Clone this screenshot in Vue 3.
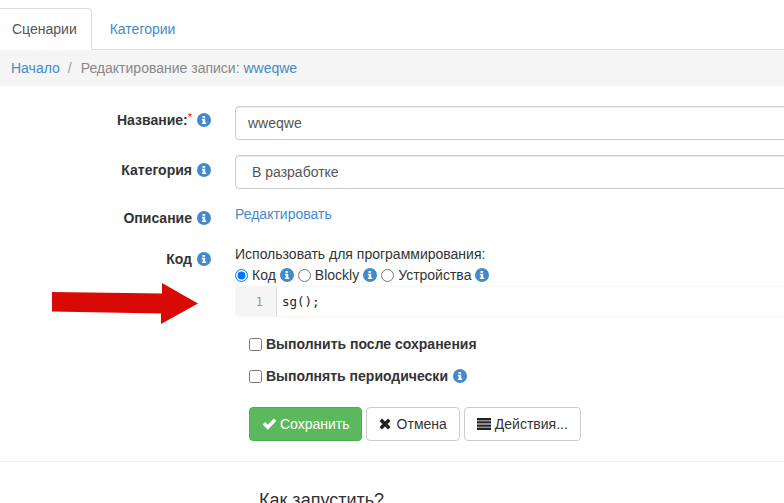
<script setup>
const iPath = 'M5.4 2.9h2.7v1.9H5.4zM4.9 5.8h3.3v3.7h1v1.6H4.9V9.500h1V7.400h-1z'
</script>

<template>
  <div class="page">
    <ul class="tabs">
      <li class="tab active">Сценарии</li>
      <li class="tab">Категории</li>
    </ul>
    <div class="crumbs">
      <a>Начало</a><span class="sep">/</span><span class="muted">Редактирование записи:</span>&nbsp;<a>wweqwe</a>
    </div>

    <form class="form" @submit.prevent>
      <div class="row r-name">
        <label class="lab">Название:<span class="req">*</span><svg class="info" viewBox="0 0 14 14"><circle cx="7" cy="7" r="7" fill="#428bca"/><path :d="iPath" fill="#fff"/></svg></label>
        <div class="field"><div class="control">wweqwe</div></div>
      </div>
      <div class="row r-cat">
        <label class="lab">Категория<svg class="info" viewBox="0 0 14 14"><circle cx="7" cy="7" r="7" fill="#428bca"/><path :d="iPath" fill="#fff"/></svg></label>
        <div class="field"><div class="control select">В разработке</div></div>
      </div>
      <div class="row r-desc">
        <label class="lab">Описание<svg class="info" viewBox="0 0 14 14"><circle cx="7" cy="7" r="7" fill="#428bca"/><path :d="iPath" fill="#fff"/></svg></label>
        <div class="field"><a>Редактировать</a></div>
      </div>
      <div class="row r-code">
        <label class="lab">Код<svg class="info" viewBox="0 0 14 14"><circle cx="7" cy="7" r="7" fill="#428bca"/><path :d="iPath" fill="#fff"/></svg></label>
        <div class="field">
          <div class="use">Использовать для программирования:</div>
          <div class="radios">
            <input type="radio" name="mode" checked /><span>Код</span><svg class="info" viewBox="0 0 14 14"><circle cx="7" cy="7" r="7" fill="#428bca"/><path :d="iPath" fill="#fff"/></svg>
            <input type="radio" name="mode" /><span>Blockly</span><svg class="info" viewBox="0 0 14 14"><circle cx="7" cy="7" r="7" fill="#428bca"/><path :d="iPath" fill="#fff"/></svg>
            <input type="radio" name="mode" /><span>Устройства</span><svg class="info" viewBox="0 0 14 14"><circle cx="7" cy="7" r="7" fill="#428bca"/><path :d="iPath" fill="#fff"/></svg>
          </div>
          <div class="editor">
            <div class="gutter">1</div>
            <div class="code">sg();</div>
          </div>
        </div>
      </div>

      <div class="actions">
        <label class="check"><input type="checkbox" /><b>Выполнить после сохранения</b></label>
        <label class="check second"><input type="checkbox" /><b>Выполнять периодически</b><svg class="info" viewBox="0 0 14 14"><circle cx="7" cy="7" r="7" fill="#428bca"/><path :d="iPath" fill="#fff"/></svg></label>
        <div class="buttons">
          <button class="btn ok" type="button"><svg class="ic ic-check" viewBox="0 0 16 13"><path d="M.6 7 3.200 4.400l3 3L12.800.6l2.600 2.600-9.200 9.400z" fill="#fff"/></svg>Сохранить</button>
          <button class="btn" type="button"><svg class="ic ic-x" viewBox="0 0 12 12"><path d="M3 .5 6 3.500 9 .5 11.500 3 8.500 6l3 3L9 11.500l-3-3-3 3L.5 9l3-3-3-3z" fill="#222"/></svg>Отмена</button>
          <button class="btn" type="button"><svg class="ic ic-bars" viewBox="0 0 14 12"><path d="M0 0h14v2.400H0zM0 3.200h14v2.400H0zM0 6.400h14v2.400H0zM0 9.600h14V12H0z" fill="#222"/></svg>Действия...</button>
        </div>
      </div>
    </form>

    <hr class="line" />
    <h4 class="how">Как запустить?</h4>

    <svg class="arrow" viewBox="0 0 784 503" aria-hidden="true">
      <path d="M52 292 162 293.500V283L198 303.500 161 324V313.500L52 311.500z" fill="#d90a05"/>
    </svg>
  </div>
</template>

<style>
html, body { margin: 0; overflow: hidden; background: #fff; }
</style>

<style scoped>
.page {
  position: relative;
  width: 784px;
  height: 503px;
  overflow: hidden;
  font-family: "Liberation Sans", Arial, sans-serif;
  font-size: 14px;
  line-height: 20px;
  color: #333;
  background: #fff;
}
a { color: #428bca; }
.tabs {
  display: flex;
  list-style: none;
  margin: 0;
  padding: 8px 0 0;
  height: 41px;
  border-bottom: 1px solid #ddd;
}
.tab {
  height: 40px;
  box-sizing: border-box;
  padding: 10px 15px;
  margin-left: 2px;
  color: #428bca;
  border: 1px solid transparent;
}
.tab.active {
  height: 42px;
  margin-left: -4px;
  padding-right: 14px;
  color: #555;
  background: #fff;
  border-color: #ddd;
  border-bottom-color: #fff;
  border-radius: 4px 4px 0 0;
}
.crumbs {
  height: 36px;
  box-sizing: border-box;
  padding: 8px 11px;
  background: #f5f5f5;
  color: #999;
}
.sep { padding: 0 9px 0 8px; color: #999; }
.muted { color: #888; }
.form { display: block; }
.row { display: flex; }
.lab {
  width: 211px;
  flex: none;
  display: flex;
  justify-content: flex-end;
  align-items: flex-start;
  font-weight: 700;
  color: #333;
}
.lab .info { margin-left: 5px; margin-top: 3px; }
.req { color: #f00; font-size: 11px; font-weight: 400; line-height: 14px; }
.field { margin-left: 24px; flex: none; width: 600px; }
.info { width: 14px; height: 14px; flex: none; }
.r-name { margin-top: 20px; }
.r-name .lab { padding-top: 4px; }
.r-cat { margin-top: 15px; }
.r-cat .lab { padding-top: 5px; }
.r-desc { margin-top: 10px; }
.r-desc .lab { padding-top: 9px; }
.r-desc .field { padding-top: 5px; }
.r-code { margin-top: 21px; }
.r-code .lab { padding-top: 0; }
.control {
  height: 34px;
  box-sizing: border-box;
  padding: 6px 12px;
  border: 1px solid #ccc;
  border-radius: 4px;
  color: #555;
  background: #fff;
  box-shadow: inset 0 1px 1px rgba(0, 0, 0, 0.075);
}
.select { padding-left: 16px; }
.use { line-height: 20px; margin-top: -5px; }
.radios {
  display: flex;
  align-items: center;
  height: 18px;
  margin-top: 2px;
}
.radios input {
  width: 13px;
  height: 13px;
  margin: 0 4px 0 0;
  flex: none;
}
.radios .info { margin: 0 4px 0 4px; }
.editor {
  display: flex;
  height: 31px;
  margin-top: 2px;
  background: #fff;
  border: 1px solid #f5f5f5;
  border-radius: 4px;
  box-sizing: border-box;
  font-family: "DejaVu Sans Mono", "Liberation Mono", monospace;
  font-size: 12.5px;
  line-height: 29px;
}
.gutter {
  width: 41px;
  box-sizing: border-box;
  padding-right: 13px;
  text-align: right;
  color: #999;
  background: #f5f5f5;
  border-right: 1px solid #ddd;
}
.code { padding-left: 5px; color: #222; }
.actions { margin-left: 249px; padding-top: 17px; }
.check {
  display: flex;
  align-items: center;
  height: 20px;
  font-weight: 700;
}
.check input { width: 13px; height: 13px; margin: 0 4px 0 0; }
.check .info { margin-left: 5px; }
.second { margin-top: 12px; }
.buttons { display: flex; gap: 4px; margin-top: 21px; }
.btn {
  display: inline-flex;
  align-items: center;
  height: 34px;
  box-sizing: border-box;
  padding: 6px 12px;
  font: inherit;
  color: #333;
  background: #fff;
  border: 1px solid #ccc;
  border-radius: 4px;
}
.btn.ok {
  padding-right: 11px;
  color: #fff;
  background: #5cb85c;
  border-color: #4cae4c;
}
.ic { flex: none; }
.ic-check { width: 15px; height: 12px; margin-right: 3px; }
.ic-x { width: 12px; height: 12px; margin-right: 6px; }
.ic-bars { width: 14px; height: 12px; margin-right: 4px; }
.line {
  margin: 20px 0 0;
  border: 0;
  border-top: 1px solid #eee;
}
.how {
  margin: 28px 0 0 259px;
  font-size: 18px;
  font-weight: 400;
  line-height: 20px;
  color: #333;
}
.arrow {
  position: absolute;
  left: 0;
  top: 0;
  width: 784px;
  height: 503px;
  pointer-events: none;
}
</style>
